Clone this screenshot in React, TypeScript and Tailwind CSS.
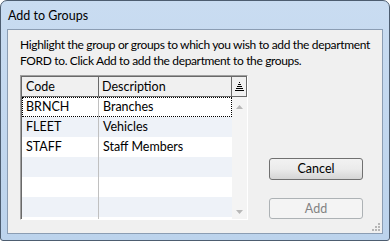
import React from 'react'

const rows = [
  { code: 'BRNCH', desc: 'Branches' },
  { code: 'FLEET', desc: 'Vehicles' },
  { code: 'STAFF', desc: 'Staff Members' },
  { code: '', desc: '' },
  { code: '', desc: '' },
  { code: '', desc: '' },
]

function SortIcon() {
  return (
    <svg width="9" height="9" viewBox="0 0 9 9" shapeRendering="crispEdges">
      <rect x="4" y="0" width="1" height="1" fill="#000" />
      <rect x="3" y="2" width="3" height="1" fill="#000" />
      <rect x="2" y="4" width="5" height="1" fill="#000" />
      <rect x="1" y="6" width="7" height="1" fill="#000" />
      <rect x="0" y="8" width="9" height="1" fill="#000" />
    </svg>
  )
}

export default function App() {
  const font = { fontFamily: 'Lato, "Noto Sans", sans-serif' }

  return (
    <div className="w-[390px] h-[241px] bg-white">
      <div
        style={font}
        className="w-[390px] h-[241px] flex flex-col bg-gradient-to-b from-[#c9dcf1] to-[#bcd3ec] border border-[#4d5d70] rounded-t-[7px] rounded-b-[3px] px-[6px] pb-[6px] text-[12.5px] text-black"
      >
        <div className="h-[28px] flex items-center pl-[1px] pt-[2px] text-[12.5px]">Add to Groups</div>

        <div className="flex-1 border border-[#8b9db3] bg-[#f0f0f0] flex flex-col pl-[12px] pr-[19px] pt-[7px] relative">
          <p className="leading-[16px] whitespace-nowrap text-[12px] tracking-[-0.35px]">
            Highlight the group or groups to which you wish to add the department
            <br />
            FORD to. Click Add to add the department to the groups.
          </p>

          <div className="flex mt-[6px]">
            {/* list */}
            <div className="w-[228px] h-[145px] border-t border-l border-t-[#a0a0a0] border-l-[#a0a0a0] border-b border-r border-b-white border-r-white flex flex-col">
              <div className="flex-1 border-t border-l border-t-[#696969] border-l-[#696969] flex flex-col bg-white">
                <div className="flex h-[20px] bg-[#f0f0f0] border-b border-[#696969]">
                  <div className="w-[77px] border-r border-[#696969] pl-[4px] leading-[19px]">Code</div>
                  <div className="w-[133px] border-r border-[#696969] pl-[3px] leading-[19px]">Description</div>
                  <div className="w-[15px] flex items-center justify-center border-r border-[#696969] bg-[#f0f0f0]">
                    <SortIcon />
                  </div>
                </div>
                <div className="flex flex-1">
                  <div className="w-[211px] flex flex-col">
                    {rows.map((r, i) => (
                      <div
                        key={i}
                        className={`flex h-[20px] ${i % 2 ? 'bg-[#eef2f8]' : 'bg-white'} ${
                          i === 0 ? 'outline outline-1 outline-dotted outline-black -outline-offset-1' : ''
                        }`}
                      >
                        <div className="w-[77px] border-r border-[#c0c0c0] pl-[4px] leading-[20px]">{r.code}</div>
                        <div className="flex-1 pl-[4px] leading-[20px]">{r.desc}</div>
                      </div>
                    ))}
                    <div className="flex flex-1 bg-white">
                      <div className="w-[77px] border-r border-[#c0c0c0]" />
                    </div>
                  </div>
                  <div className="w-[15px] bg-[#f4f4f4] flex flex-col items-center justify-between pt-[8px] pb-[5px]">
                    <svg width="7" height="4" viewBox="0 0 7 4">
                      <path d="M0 4 L3.5 0 L7 4 Z" fill="#b8b8b8" />
                    </svg>
                    <svg width="7" height="4" viewBox="0 0 7 4">
                      <path d="M0 0 L7 0 L3.5 4 Z" fill="#b8b8b8" />
                    </svg>
                  </div>
                </div>
              </div>
            </div>

            {/* buttons */}
            <div className="flex-1 flex flex-col items-end pt-[83px] gap-[18px]">
              <button className="w-[94px] h-[22px] rounded-[3px] border border-[#707070] bg-gradient-to-b from-[#f2f2f2] via-[#ebebeb] to-[#d5d5d5] text-black leading-[18px]">
                Cancel
              </button>
              <button className="w-[94px] h-[21px] rounded-[3px] border border-[#adb2b5] bg-[#f4f4f4] text-[#838383] leading-[18px]">
                Add
              </button>
            </div>
          </div>

          {/* size grip */}
          <svg className="absolute right-[2px] bottom-[2px]" width="10" height="10" viewBox="0 0 10 10">
            {[
              [8, 2],
              [5, 5],
              [8, 5],
              [2, 8],
              [5, 8],
              [8, 8],
            ].map(([x, y], i) => (
              <rect key={i} x={x} y={y} width="2" height="2" fill="#b5b5b5" />
            ))}
          </svg>
        </div>
      </div>
    </div>
  )
}
